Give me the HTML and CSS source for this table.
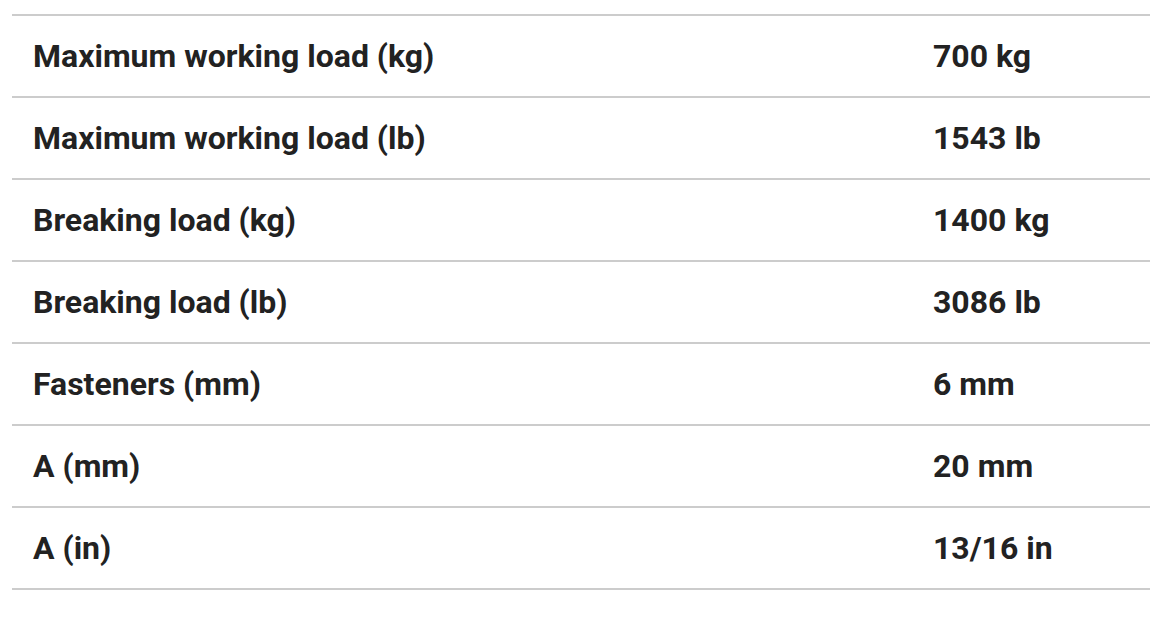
FILE: index.html
```html
<!DOCTYPE html>
<html>
<head>
<meta charset="utf-8">
<link rel="stylesheet" href="styles.css">
</head>
<body>
<table class="specs">
  <tbody>
    <tr><td class="label">Maximum working load (kg)</td><td class="value">700 kg</td></tr>
    <tr><td class="label">Maximum working load (lb)</td><td class="value">1543 lb</td></tr>
    <tr><td class="label">Breaking load (kg)</td><td class="value">1400 kg</td></tr>
    <tr><td class="label">Breaking load (lb)</td><td class="value">3086 lb</td></tr>
    <tr><td class="label">Fasteners (mm)</td><td class="value">6 mm</td></tr>
    <tr><td class="label">A (mm)</td><td class="value">20 mm</td></tr>
    <tr><td class="label">A (in)</td><td class="value">13/16 in</td></tr>
  </tbody>
</table>
</body>
</html>
```
FILE: styles.css
```css
html, body {
  margin: 0;
  padding: 0;
  background: #fff;
}
body {
  padding: 14px 0 0 12px;
  font-family: Roboto, "Liberation Sans", sans-serif;
  color: #222;
}
.specs {
  width: 1138px;
  border-collapse: collapse;
  table-layout: fixed;
}
.specs td {
  border-top: 2px solid #ccc;
  border-bottom: 2px solid #ccc;
  height: 82px;
  padding: 0 21px;
  box-sizing: border-box;
  font-size: 32px;
  font-weight: 700;
  line-height: 1.2;
  vertical-align: middle;
}
.specs .label {
  width: 900px;
}
```
